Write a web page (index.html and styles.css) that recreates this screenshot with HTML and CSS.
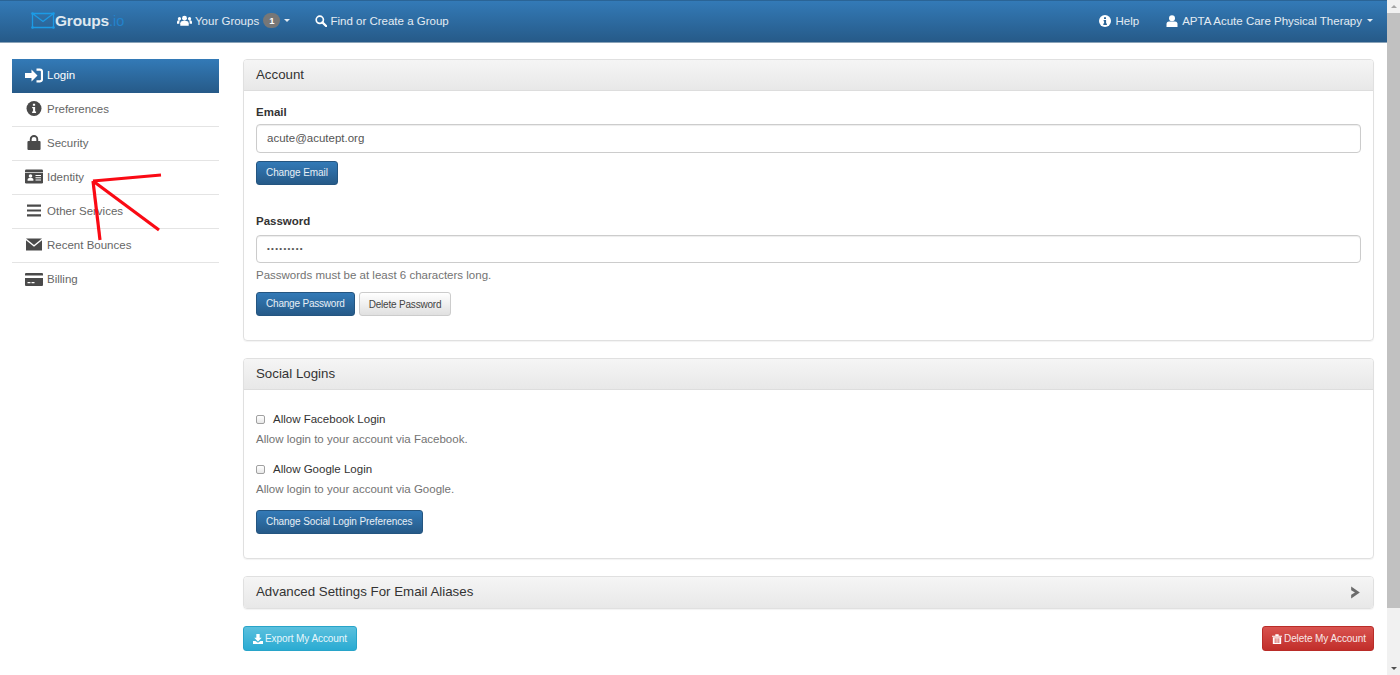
FILE: index.html
```html
<!DOCTYPE html>
<html lang="en">
<head>
<meta charset="utf-8">
<title>Account</title>
<link rel="stylesheet" href="styles.css">
</head>
<body>
<div class="window">
  <div class="page">
    <nav class="navbar">
      <a class="brand">
        <svg class="logo" viewBox="0 0 24 17"><path d="M1.500 1.500h21v14h-21zM1.500 1.500l10.500 8 10.500-8" fill="none" stroke="#1c9be6" stroke-width="1.300"/><g fill="#1c9be6"><circle cx="1.500" cy="1.500" r="1.300"/><circle cx="22.500" cy="1.500" r="1.300"/><circle cx="1.500" cy="15.500" r="1.300"/><circle cx="22.500" cy="15.500" r="1.300"/></g></svg>
        <span class="brand-main">Groups</span><span class="brand-io">.io</span>
      </a>
      <a class="nav-item nav-groups">
        <svg class="nav-icon wide" viewBox="0 0 16 12"><g fill="#fff"><circle cx="8" cy="3" r="2.600"/><path d="M3.500 11V8.500Q3.500 6 6 6h4q2.500 0 2.500 2.500V11z"/><circle cx="2.600" cy="3.500" r="1.700"/><circle cx="13.400" cy="3.500" r="1.700"/><path d="M0 9V7q0-1.700 1.700-1.700h1.500Q2.500 6.200 2.500 8v1zM16 9V7q0-1.700-1.700-1.700h-1.500q.7.900.7 2.700v1z"/></g></svg>
        <span>Your Groups</span><span class="badge">1</span><span class="caret"></span>
      </a>
      <a class="nav-item nav-find">
        <svg class="nav-icon icon-tight" viewBox="0 0 13 13"><circle cx="5.200" cy="5.200" r="3.900" fill="none" stroke="#fff" stroke-width="1.800"/><path d="M8 8l4 4" stroke="#fff" stroke-width="2.400" stroke-linecap="round"/></svg>
        <span>Find or Create a Group</span>
      </a>
      <a class="nav-item nav-help">
        <svg class="nav-icon" viewBox="0 0 12 12"><circle cx="6" cy="6" r="6" fill="#fff"/><path d="M5 2.200h2v1.700H5zM4.600 5h2.500v3.600h.8V10H4.300V8.600h.8V6.300h-.5z" fill="#2a6496"/></svg>
        <span>Help</span>
      </a>
      <a class="nav-item nav-user">
        <svg class="nav-icon icon-user" viewBox="0 0 12 12"><circle cx="6" cy="3.200" r="3" fill="#fff"/><path d="M.5 12V9Q.5 6.500 3 6.500h6q2.500 0 2.500 2.500v3z" fill="#fff"/></svg>
        <span>APTA Acute Care Physical Therapy</span><span class="caret"></span>
      </a>
    </nav>
    <div class="content">
      <aside class="sidebar">
        <a class="side-item active">
          <svg class="side-icon" viewBox="0 0 18 14"><path d="M0 4.500h6.500V1L12.500 7l-6 6V9.500H0z" fill="#fff"/><path d="M11.500 1.200h3.500q2 0 2 2v7.600q0 2-2 2h-3.500" fill="none" stroke="#fff" stroke-width="2.200"/></svg>
          <span>Login</span>
        </a>
        <a class="side-item">
          <svg class="side-icon" viewBox="0 0 18 16"><circle cx="9" cy="8" r="8" fill="#4a4a4a"/><path d="M7.800 2.800h2.400v2.200H7.800zM7 6.300h3.200v5h1v1.500H7v-1.500h1V7.800H7z" fill="#fff"/></svg>
          <span>Preferences</span>
        </a>
        <a class="side-item">
          <svg class="side-icon" viewBox="0 0 18 16"><path d="M5.500 7V4.500a3.500 3.500 0 0 1 7 0V7" fill="none" stroke="#4a4a4a" stroke-width="2"/><rect x="2" y="6.500" width="14" height="9.500" rx="1" fill="#4a4a4a"/></svg>
          <span>Security</span>
        </a>
        <a class="side-item">
          <svg class="side-icon" viewBox="0 0 18 14"><rect width="18" height="14" rx="1.200" fill="#4a4a4a"/><rect x="0" y="2.500" width="18" height=".7" fill="#fff"/><circle cx="5.500" cy="6.500" r="1.800" fill="#fff"/><path d="M2.600 11.200V10q0-1.500 1.500-1.500h2.800q1.500 0 1.500 1.500v1.200z" fill="#fff"/><path d="M10.500 5.500h5.500v1h-5.500zM10.500 7.700h5.500v1h-5.500zM10.500 9.900h5.500v1h-5.500z" fill="#fff"/></svg>
          <span>Identity</span>
        </a>
        <a class="side-item">
          <svg class="side-icon" viewBox="0 0 18 14"><path d="M2 1h14v2.200H2zM2 5.900h14v2.200H2zM2 10.800h14V13H2z" fill="#4a4a4a"/></svg>
          <span>Other Services</span>
        </a>
        <a class="side-item">
          <svg class="side-icon" viewBox="0 0 18 14"><path d="M1 1h16L9 7.500z" fill="#4a4a4a"/><path d="M1 2.800V13h16V2.800L9 9.300z" fill="#4a4a4a"/></svg>
          <span>Recent Bounces</span>
        </a>
        <a class="side-item">
          <svg class="side-icon" viewBox="0 0 18 14"><path d="M0 1.500Q0 .5 1 .5h16q1 0 1 1V3H0zM0 5.500h18v7q0 1-1 1H1q-1 0-1-1z" fill="#4a4a4a"/><path d="M2.500 9.500h3v1.200h-3zM6.500 9.500h3v1.200h-3z" fill="#fff"/></svg>
          <span>Billing</span>
        </a>
      </aside>
      <main class="main">
        <section class="panel panel-account">
          <h2 class="panel-heading">Account</h2>
          <div class="panel-body">
            <label class="field-label">Email</label>
            <div class="input">acute@acutept.org</div>
            <a class="btn btn-primary">Change Email</a>
            <label class="field-label label-password">Password</label>
            <div class="input input-dots">•••••••••</div>
            <p class="help">Passwords must be at least 6 characters long.</p>
            <div class="btn-row">
              <a class="btn btn-primary">Change Password</a>
              <a class="btn btn-default">Delete Password</a>
            </div>
          </div>
        </section>
        <section class="panel panel-social">
          <h2 class="panel-heading">Social Logins</h2>
          <div class="panel-body social-body">
            <div class="check-row"><span class="checkbox"></span><span>Allow Facebook Login</span></div>
            <p class="help">Allow login to your account via Facebook.</p>
            <div class="check-row second"><span class="checkbox"></span><span>Allow Google Login</span></div>
            <p class="help">Allow login to your account via Google.</p>
            <a class="btn btn-primary btn-social">Change Social Login Preferences</a>
          </div>
        </section>
        <section class="panel panel-collapsed">
          <h2 class="panel-heading heading-flush">
            <span>Advanced Settings For Email Aliases</span>
            <svg class="chevron" viewBox="0 0 10 12"><path d="M1 0.500L9 6l-8 5.500V8L4.500 6 1 4z" fill="#6b6b6b"/></svg>
          </h2>
        </section>
        <div class="actions">
          <a class="btn btn-info">
            <svg class="btn-icon" viewBox="0 0 12 12"><path d="M4 0h4v4.500h2.500L6 9 1.500 4.500H4z" fill="#fff"/><path d="M0 8.500h3L6 10.500 9 8.500h3V12H0z" fill="#fff"/></svg>
            <span>Export My Account</span>
          </a>
          <a class="btn btn-danger">
            <svg class="btn-icon" viewBox="0 0 12 12"><path d="M0 2h12v1.300H0zM4 .3h4V2H4zM1 4h10v8H1z" fill="#fff"/><path d="M3.300 5.200h.9v5.600h-.9zM5.550 5.200h.9v5.600h-.9zM7.800 5.200h.9v5.600h-.9z" fill="#c9302c"/></svg>
            <span>Delete My Account</span>
          </a>
        </div>
      </main>
    </div>
    <svg class="arrow" viewBox="0 0 80 70"><g fill="none" stroke="#fa0a14" stroke-width="3.200"><path d="M70 2L2 8"/><path d="M2 8L68 57"/><path d="M2 8L9 67"/></g></svg>
  </div>
  <div class="scrollbar">
    <div class="sb-btn"><span class="sb-up"></span></div>
    <div class="sb-thumb"></div>
    <div class="sb-track"></div>
    <div class="sb-btn"><span class="sb-down"></span></div>
  </div>
</div>
</body>
</html>
```

FILE: styles.css
```css
* { box-sizing: border-box; }
html, body { margin: 0; height: 100%; overflow: hidden; background: #fff; }
body { font-family: "Liberation Sans", Arial, sans-serif; font-size: 11.500px; color: #333; }
.window { display: flex; height: 675px; width: 1400px; }
.page { position: relative; flex: 1; min-width: 0; }

.navbar { display: flex; align-items: center; height: 43px; padding: 0 14px 2px 31px; color: #e4ecf3; font-size: 11.500px;
  background: linear-gradient(#337ab7, #265a88); border-top: 1px solid #2a6496; border-bottom: 1px solid #8aa3b8; }
.brand { display: flex; align-items: center; width: 146px; }
.logo { width: 24px; height: 17px; margin-top: 0; }
.brand-main { font-size: 15.500px; font-weight: 700; color: #dfe8f0; letter-spacing: -.2px; }
.brand-io { font-size: 14.500px; color: #2383cc; }
.nav-item { display: flex; align-items: center; }
.nav-icon { width: 12px; height: 12px; margin-right: 5px; flex: none; }
.nav-icon.wide { width: 15px; margin-right: 3px; }
.nav-icon.icon-tight { margin-right: 3px; }
.nav-icon.icon-user { margin-left: 1px; margin-right: 4px; }
.nav-find { margin-left: 25px; }
.nav-help { margin-left: auto; }
.nav-user { margin-left: 26px; }
.badge { background: #777; color: #fff; font-weight: 700; font-size: 9.500px; border-radius: 9px; padding: 2px 6px; margin-left: 4px; line-height: 11px; }
.caret { width: 0; height: 0; border-left: 3.500px solid transparent; border-right: 3.500px solid transparent; border-top: 3.500px solid #e4ecf3; margin-left: 4px; }
.nav-user .caret { margin-left: 5px; }

.content { display: flex; align-items: flex-start; padding: 16px 13px 0 12px; gap: 24px; }
.sidebar { width: 207px; flex: none; }
.side-item { display: flex; align-items: center; height: 34px; padding: 0 0 2px 13px; color: #666; border-bottom: 1px solid #e4e4e4; }
.side-item:last-child { border-bottom: 0; }
.side-item.active { color: #fff; background: linear-gradient(#337ab7, #265a88); border-bottom: 0; }
.side-icon { width: 18px; height: 15px; margin-right: 4px; flex: none; }

.main { flex: 1; min-width: 0; }
.panel { border: 1px solid #e0e0e0; border-radius: 4px; margin-bottom: 17px; box-shadow: 0 1px 1px rgba(0,0,0,.05); }
.panel-account { height: 282px; }
.panel-social { height: 201px; }
.panel-collapsed { height: 33px; }
.panel-heading { margin: 0; font-size: 13.300px; font-weight: 400; color: #333; height: 31px; line-height: 30px; padding: 0 12px;
  background: linear-gradient(#f5f5f5, #e8e8e8); border-bottom: 1px solid #ddd; border-radius: 3px 3px 0 0; }
.heading-flush { display: flex; align-items: center; justify-content: space-between; height: 31px; border-bottom: 0; border-radius: 3px; padding-bottom: 2px; }
.chevron { width: 11px; height: 13px; margin-top: 1px; }
.panel-body { padding: 14px 12px 0; }
.field-label { display: block; font-weight: 700; font-size: 11.500px; color: #333; line-height: 14px; margin-bottom: 5px; }
.label-password { margin-top: 29px; margin-bottom: 7px; }
.input { height: 29px; border: 1px solid #ccc; border-radius: 4px; padding: 0 10px; line-height: 27px; color: #555; box-shadow: inset 0 1px 1px rgba(0,0,0,.075); }
.input-dots { height: 28px; font-size: 8px; letter-spacing: 1.300px; line-height: 26px; }
.input + .btn { margin-top: 8px; }
.help { margin: 0; color: #737373; font-size: 11.500px; line-height: 14px; }
.input-dots + .help { margin-top: 5px; }
.btn-row { display: flex; gap: 4px; margin-top: 10px; }
.btn-row .btn { letter-spacing: -.2px; }

.btn { display: inline-flex; align-items: center; justify-content: center; height: 24px; padding: 0 9px; border-radius: 3px; font-size: 10px; font-weight: 400; letter-spacing: -.08px; }
.btn-primary { color: #e8eff5; background: linear-gradient(#337ab7, #265a88); border: 1px solid #245580; padding-bottom: 1px; }
.btn-default { color: #444; background: linear-gradient(#fff, #e0e0e0); border: 1px solid #ccc; }
.btn-info { height: 25px; padding: 0 9px; color: #e8f6fb; background: linear-gradient(#5bc0de, #2aabd2); border: 1px solid #28a4c9; }
.btn-danger { height: 25px; padding: 0 7px 0 9px; color: #f8e8e8; background: linear-gradient(#d9534f, #c12e2a); border: 1px solid #b92c28; }
.btn-icon { width: 10px; height: 10px; margin-right: 2px; }

.social-body { padding-top: 22px; }
.check-row { display: flex; align-items: center; color: #333; line-height: 14px; }
.check-row.second { margin-top: 16px; }
.check-row + .help { margin-top: 6px; }
.checkbox { width: 9px; height: 9px; margin-right: 8px; border: 1px solid #a0a0a0; border-radius: 2px; background: linear-gradient(#fff, #e8e8e8); }
.btn-social { margin-top: 14px; }

.actions { display: flex; justify-content: space-between; }

.arrow { position: absolute; left: 91px; top: 173px; width: 80px; height: 70px; }

.scrollbar { width: 13px; flex: none; display: flex; flex-direction: column; background: #f1f1f1; }
.sb-btn { height: 13px; display: flex; align-items: center; justify-content: center; }
.sb-up { width: 0; height: 0; border-left: 3.500px solid transparent; border-right: 3.500px solid transparent; border-bottom: 3.500px solid #a3a3a3; }
.sb-down { width: 0; height: 0; border-left: 3.500px solid transparent; border-right: 3.500px solid transparent; border-top: 3.500px solid #505050; }
.sb-thumb { height: 595px; background: #c1c1c1; }
.sb-track { flex: 1; }
```
